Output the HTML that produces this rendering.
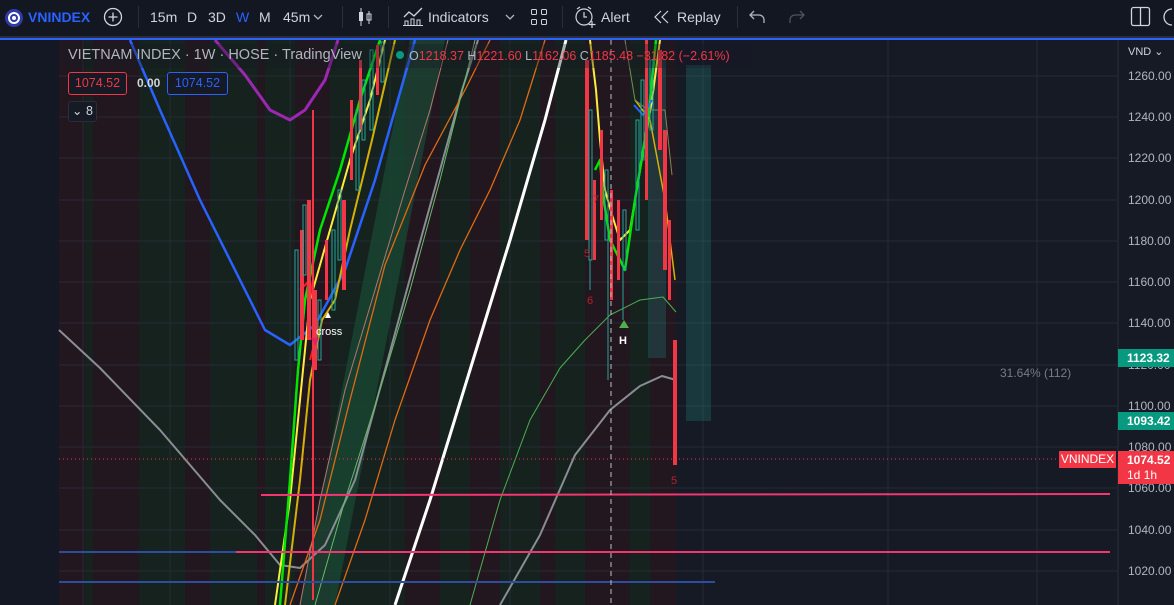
<!DOCTYPE html>
<html><head><meta charset="utf-8">
<style>
*{margin:0;padding:0;box-sizing:border-box}
body{width:1174px;height:605px;overflow:hidden;background:#131722;font-family:"Liberation Sans",sans-serif;position:relative}
#tb{position:absolute;left:0;top:0;width:1174px;height:36px;background:#131722;color:#d1d4dc;font-size:14px}
#tb span{position:absolute;top:9px;white-space:nowrap}
#tb svg{position:absolute}
.sep{position:absolute;top:6px;width:1px;height:22px;background:#2a2e39}
#gap{position:absolute;left:0;top:36px;width:1174px;height:3px;background:#2a2e39}
#bl{position:absolute;left:0;top:38px;width:1174px;height:2px;background:#2962ff}
body>svg{position:absolute;left:0;top:0}
.lg{position:absolute;font-size:14.5px;color:#b2b5be;white-space:nowrap}
.ax{position:absolute;left:1128px;font-size:12px;color:#b2b5be}
.tag{position:absolute;left:1118px;width:56px;color:#fff;font-size:12px;font-weight:bold;padding-left:9px}
</style></head><body>
<svg width="1174" height="605">
<rect x="0" y="40" width="1174" height="565" fill="#161a25"/>
<rect x="0" y="40" width="59" height="565" fill="#141824"/>
<g>
<rect x="59" y="40" width="26" height="565" fill="#22171f"/>
<rect x="85" y="40" width="8" height="565" fill="#15221e"/>
<rect x="93" y="40" width="46" height="565" fill="#22171f"/>
<rect x="139" y="40" width="46" height="565" fill="#15221e"/>
<rect x="185" y="40" width="25" height="565" fill="#22171f"/>
<rect x="210" y="40" width="47" height="565" fill="#15221e"/>
<rect x="257" y="40" width="8" height="565" fill="#22171f"/>
<rect x="265" y="40" width="30" height="565" fill="#15221e"/>
<rect x="295" y="40" width="35" height="565" fill="#22171f"/>
<rect x="330" y="40" width="75" height="565" fill="#15221e"/>
<rect x="405" y="40" width="35" height="565" fill="#22171f"/>
<rect x="440" y="40" width="30" height="565" fill="#15221e"/>
<rect x="470" y="40" width="30" height="565" fill="#22171f"/>
<rect x="500" y="40" width="40" height="565" fill="#15221e"/>
<rect x="540" y="40" width="15" height="565" fill="#22171f"/>
<rect x="555" y="40" width="30" height="565" fill="#15221e"/>
<rect x="585" y="40" width="45" height="565" fill="#22171f"/>
<rect x="630" y="40" width="20" height="565" fill="#15221e"/>
<rect x="650" y="40" width="26" height="565" fill="#22171f"/>
</g>
<g stroke="#2a2e39" stroke-width="1" opacity="0.8">
<line x1="59" y1="76" x2="1118" y2="76"/><line x1="59" y1="117" x2="1118" y2="117"/><line x1="59" y1="158" x2="1118" y2="158"/><line x1="59" y1="200" x2="1118" y2="200"/><line x1="59" y1="241" x2="1118" y2="241"/><line x1="59" y1="282" x2="1118" y2="282"/><line x1="59" y1="323" x2="1118" y2="323"/><line x1="59" y1="365" x2="1118" y2="365"/><line x1="59" y1="406" x2="1118" y2="406"/><line x1="59" y1="447" x2="1118" y2="447"/><line x1="59" y1="488" x2="1118" y2="488"/><line x1="59" y1="530" x2="1118" y2="530"/><line x1="59" y1="571" x2="1118" y2="571"/>
<line x1="83" y1="40" x2="83" y2="605"/><line x1="170" y1="40" x2="170" y2="605"/><line x1="290" y1="40" x2="290" y2="605"/><line x1="390" y1="40" x2="390" y2="605"/><line x1="510" y1="40" x2="510" y2="605"/><line x1="703" y1="40" x2="703" y2="605"/><line x1="888" y1="40" x2="888" y2="605"/><line x1="1037" y1="40" x2="1037" y2="605"/>
</g>
<polygon points="300,605 335,605 445,40 410,40" fill="#1a4a34" opacity="0.7"/>
<rect x="648" y="60" width="18" height="298" fill="#26a69a" opacity="0.22"/>
<rect x="686" y="65" width="25" height="356" fill="#26a69a" opacity="0.22"/>
<g fill="none" stroke-linejoin="round">
<polyline points="130,40 160,110 200,200 240,280 265,330 290,345 315,325 345,270 375,180 395,110 415,40" stroke="#2962ff" stroke-width="2.5"/>
<polyline points="215,40 245,75 270,110 290,120 305,110 325,80 338,40" stroke="#9c27b0" stroke-width="3"/>
<polyline points="59,330 100,368 160,430 220,500 255,535 280,565 300,568 325,545 355,480 385,370 415,260 440,170 462,90 478,40" stroke="#8a8d94" stroke-width="2"/>
<polyline points="500,605 540,535 575,455 610,410 640,386 662,376 676,380" stroke="#8a8d94" stroke-width="2"/>
<polyline points="395,605 430,500 470,370 510,240 545,120 566,40" stroke="#ffffff" stroke-width="3"/>
<polyline points="290,605 320,520 350,400 385,265 425,165 465,90 490,40" stroke="#e06a14" stroke-width="1.3"/>
<polyline points="335,605 365,520 395,420 430,320 460,250 490,190 520,120 545,40" stroke="#e06a14" stroke-width="1.3"/>
<polyline points="300,605 320,500 345,390 375,290 405,190 430,110 448,40" stroke="#b07870" stroke-width="1"/>
<polyline points="315,605 345,500 380,390 410,290 440,180 470,60 475,40" stroke="#66bb6a" stroke-width="1"/>
<polyline points="470,605 500,500 530,420 560,368 585,340 610,315 640,300 663,297 676,312" stroke="#4caf50" stroke-width="1"/>
<polyline points="275,605 290,500 300,400 310,300 330,230 350,160 370,100 385,40" stroke="#ffeb3b" stroke-width="2"/>
<polyline points="285,605 300,480 310,380 322,320 335,300 350,230 372,140 395,40" stroke="#d4b106" stroke-width="2"/>
<polyline points="280,605 290,480 298,370 305,300 320,230 340,170 360,100 380,40" stroke="#00e600" stroke-width="2.5"/>
<polyline points="300,290 310,280 318,330 310,360" stroke="#ff1a1a" stroke-width="2"/>
<polyline points="590,40 596,90 600,140 605,190 612,215 620,240 630,230 640,170 652,100 660,40" stroke="#ffeb3b" stroke-width="2"/>
<polyline points="595,170 600,160 603,195 610,240 625,270 635,200 648,120 656,40" stroke="#00e600" stroke-width="2.5"/>
<polyline points="635,100 650,120 665,200 675,280" stroke="#d4b106" stroke-width="1.5"/>
<polyline points="625,40 635,100 648,110 665,110 672,175" stroke="#7a8a5a" stroke-width="1"/>
<polyline points="634,105 643,115 652,100" stroke="#2962ff" stroke-width="2"/>
</g>
<g fill="#f23645">
<rect x="300" y="230" width="4" height="110"/><rect x="307" y="200" width="4" height="140"/><rect x="313" y="290" width="4" height="80"/><rect x="325" y="240" width="3" height="60"/><rect x="342" y="200" width="4" height="90"/><rect x="350" y="100" width="3" height="80"/><rect x="359" y="60" width="3" height="70"/><rect x="376" y="45" width="3" height="50"/>
<rect x="585" y="60" width="4" height="180"/><rect x="593" y="180" width="3" height="80"/><rect x="600" y="130" width="3" height="90"/><rect x="610" y="190" width="3" height="110"/><rect x="617" y="200" width="3" height="80"/><rect x="658" y="50" width="4" height="100"/><rect x="663" y="130" width="4" height="140"/><rect x="668" y="220" width="3" height="80"/><rect x="673" y="340" width="4" height="125"/>
<rect x="312" y="110" width="2" height="490"/><rect x="645" y="40" width="3" height="160"/>
</g>
<g fill="none" stroke="#26a69a" stroke-width="1">
<rect x="295" y="250" width="3" height="110"/><rect x="303" y="205" width="3" height="70"/><rect x="318" y="300" width="3" height="60"/><rect x="332" y="230" width="3" height="80"/><rect x="338" y="190" width="3" height="70"/><rect x="356" y="110" width="3" height="80"/><rect x="362" y="80" width="3" height="60"/><rect x="370" y="50" width="3" height="80"/><rect x="381" y="42" width="3" height="40"/>
<rect x="589" y="110" width="3" height="150"/><rect x="605" y="170" width="3" height="70"/><rect x="623" y="210" width="3" height="60"/><rect x="636" y="120" width="3" height="110"/><rect x="641" y="80" width="3" height="80"/><rect x="650" y="60" width="3" height="70"/>
<line x1="590" y1="260" x2="590" y2="290"/><line x1="623" y1="270" x2="623" y2="320"/><line x1="608" y1="240" x2="608" y2="380"/>
</g>
<line x1="261" y1="495" x2="1110" y2="494" stroke="#f23672" stroke-width="2"/>
<line x1="236" y1="552" x2="1110" y2="552" stroke="#f23672" stroke-width="2"/>
<line x1="59" y1="552" x2="236" y2="552" stroke="#2d4ea0" stroke-width="2"/>
<line x1="59" y1="582" x2="715" y2="582" stroke="#2d4ea0" stroke-width="2"/>
<line x1="59" y1="459" x2="1060" y2="459" stroke="#f23645" stroke-width="1" stroke-dasharray="1,3"/>
<line x1="611" y1="40" x2="611" y2="605" stroke="#c0c0c0" stroke-width="1" stroke-dasharray="5,4"/>
<polygon points="325,318 331,318 328,312" fill="#fff"/>
<polygon points="311,338 319,338 315,346" fill="#e91e63"/>
<polygon points="619,328 629,328 624,320" fill="#4caf50"/>
<text x="316" y="335" font-size="11" fill="#fff" font-family="Liberation Sans">cross</text>
<text x="619" y="344" font-size="11" fill="#fff" font-weight="bold" font-family="Liberation Sans">H</text>
<g font-size="11" fill="#b2222a" font-family="Liberation Sans"><text x="584" y="257">5</text><text x="587" y="304">6</text><text x="671" y="484">5</text><text x="593" y="203">7</text></g>
<line x1="1118" y1="40" x2="1118" y2="605" stroke="#2a2e39"/>
</svg>
<div id="tb">
<svg width="20" height="20" style="left:4px;top:8px"><circle cx="10" cy="10" r="9" fill="#2f3aa6"/><circle cx="10" cy="10" r="5" fill="none" stroke="#fff" stroke-width="2"/><circle cx="10" cy="10" r="2" fill="#fff"/></svg>
<span style="left:28px;color:#2962ff;font-weight:bold">VNINDEX</span>
<svg width="22" height="22" style="left:102px;top:6px"><circle cx="11" cy="11" r="8.5" fill="none" stroke="#d1d4dc" stroke-width="1.3"/><path d="M11 6.5v9M6.5 11h9" stroke="#d1d4dc" stroke-width="1.3"/></svg>
<div class="sep" style="left:138px"></div>
<span style="left:131px;left:131px;display:none"></span>
<span style="left:131px;display:none"></span>
<span style="left:131px;display:none"></span>
<span style="left:131px;display:none"></span>
<span style="left:131px;display:none"></span>
<span style="left:150px">15m</span><span style="left:187px">D</span><span style="left:208px">3D</span><span style="left:236px;color:#2962ff">W</span><span style="left:259px">M</span><span style="left:283px">45m</span>
<svg width="10" height="6" style="left:313px;top:14px"><path d="M1 1l4 4 4-4" fill="none" stroke="#b2b5be" stroke-width="1.3"/></svg>
<div class="sep" style="left:342px"></div>
<svg width="18" height="20" style="left:356px;top:7px"><path d="M5 1v18M13 4v13" stroke="#d1d4dc"/><rect x="3" y="5" width="4" height="9" fill="#d1d4dc"/><rect x="11" y="7" width="4" height="6" fill="none" stroke="#d1d4dc"/></svg>
<div class="sep" style="left:388px"></div>
<svg width="22" height="22" style="left:402px;top:5px"><path d="M2 12l5-5 5 4 8-8" fill="none" stroke="#d1d4dc" stroke-width="1.3"/><path d="M3 20v-4h3v4M9 20v-6h3v6M15 20v-5h3v5M1 20.5h20" fill="none" stroke="#d1d4dc"/></svg>
<span style="left:428px">Indicators</span>
<svg width="10" height="6" style="left:505px;top:14px"><path d="M1 1l4 4 4-4" fill="none" stroke="#b2b5be" stroke-width="1.3"/></svg>
<svg width="18" height="18" style="left:530px;top:8px" fill="none" stroke="#d1d4dc"><rect x="1.5" y="1.5" width="5" height="5" rx="1"/><rect x="11.5" y="1.5" width="5" height="5" rx="1"/><rect x="1.5" y="11.5" width="5" height="5" rx="1"/><rect x="11.5" y="11.5" width="5" height="5" rx="1"/></svg>
<div class="sep" style="left:562px"></div>
<svg width="24" height="24" style="left:574px;top:5px" fill="none" stroke="#d1d4dc" stroke-width="1.2"><circle cx="10" cy="12" r="8"/><path d="M10 7v5h3M3 4l3-2M17 4l-3-2M18 16v7M14.5 19.5h7"/></svg>
<span style="left:601px">Alert</span>
<svg width="18" height="14" style="left:654px;top:10px" fill="none" stroke="#d1d4dc" stroke-width="1.2"><path d="M7 1L1 7l6 6M14 1L8 7l6 6"/></svg>
<span style="left:677px">Replay</span>
<div class="sep" style="left:737px"></div>
<svg width="18" height="14" style="left:749px;top:10px" fill="none" stroke="#b2b5be" stroke-width="1.3"><path d="M5 1L1 5l4 4M1 5h9a5 5 0 0 1 5 5v3"/></svg>
<svg width="18" height="14" style="left:787px;top:10px" fill="none" stroke="#50535e" stroke-width="1.3"><path d="M13 1l4 4-4 4M17 5H8a5 5 0 0 0-5 5v3"/></svg>
<svg width="22" height="22" style="left:1130px;top:6px" fill="none" stroke="#d1d4dc" stroke-width="1.3"><rect x="1.5" y="1.5" width="18" height="18" rx="2"/><path d="M10.5 1.5v18"/></svg>
<svg width="14" height="22" style="left:1162px;top:6px" fill="none" stroke="#d1d4dc" stroke-width="1.3"><path d="M10 3a8 8 0 1 0 0 16"/></svg>
</div>
<div id="gap"></div><div id="bl"></div>
<div style="position:absolute;left:62px;top:44px;width:690px;height:24px;background:rgba(22,26,37,0.35)"></div>
<div class="lg" style="left:68px;top:47px">VIETNAM INDEX · 1W · HOSE · TradingView</div>
<div style="position:absolute;left:396px;top:51px;width:8px;height:8px;border-radius:50%;background:#089981"></div>
<div class="lg" style="left:409px;top:49px;font-size:12.5px;color:#f23645"><span style="color:#b2b5be">O</span>1218.37 <span style="color:#b2b5be">H</span>1221.60 <span style="color:#b2b5be">L</span>1162.06 <span style="color:#b2b5be">C</span>1185.48 −31.82 (−2.61%)</div>
<div style="position:absolute;left:68px;top:72px;width:59px;height:23px;border:1px solid #f23645;border-radius:3px;color:#f23645;font-size:12.5px;line-height:21px;text-align:center;background:#161a25">1074.52</div>
<div style="position:absolute;left:137px;top:76px;color:#d1d4dc;font-size:12px;font-weight:bold">0.00</div>
<div style="position:absolute;left:167px;top:72px;width:61px;height:23px;border:1px solid #2962ff;border-radius:3px;color:#2962ff;font-size:12.5px;line-height:21px;text-align:center;background:#161a25">1074.52</div>
<div style="position:absolute;left:68px;top:101px;width:29px;height:21px;border:1px solid #2a2e39;border-radius:3px;color:#d1d4dc;font-size:12.5px;line-height:19px;text-align:center;background:#161a25">⌄ 8</div>
<div style="position:absolute;left:1000px;top:366px;font-size:12px;color:#787b86">31.64% (112)</div>
<div style="position:absolute;left:1128px;top:45px;font-size:11px;color:#d1d4dc">VND ⌄</div>
<div class="ax" style="top:69px">1260.00</div><div class="ax" style="top:110px">1240.00</div><div class="ax" style="top:151px">1220.00</div><div class="ax" style="top:193px">1200.00</div><div class="ax" style="top:234px">1180.00</div><div class="ax" style="top:275px">1160.00</div><div class="ax" style="top:316px">1140.00</div><div class="ax" style="top:358px">1120.00</div><div class="ax" style="top:399px">1100.00</div><div class="ax" style="top:440px">1080.00</div><div class="ax" style="top:481px">1060.00</div><div class="ax" style="top:523px">1040.00</div><div class="ax" style="top:564px">1020.00</div>
<div class="tag" style="top:349px;height:18px;line-height:18px;background:#089981">1123.32</div>
<div class="tag" style="top:412px;height:18px;line-height:18px;background:#089981">1093.42</div>
<div class="tag" style="top:451px;height:33px;line-height:15px;padding-top:2px;background:#f23645">1074.52<br><span style="font-weight:normal">1d 1h</span></div>
<div style="position:absolute;left:1059px;top:451px;width:57px;height:17px;background:#f23645;color:#fff;font-size:12px;line-height:17px;text-align:center">VNINDEX</div>
</body></html>
